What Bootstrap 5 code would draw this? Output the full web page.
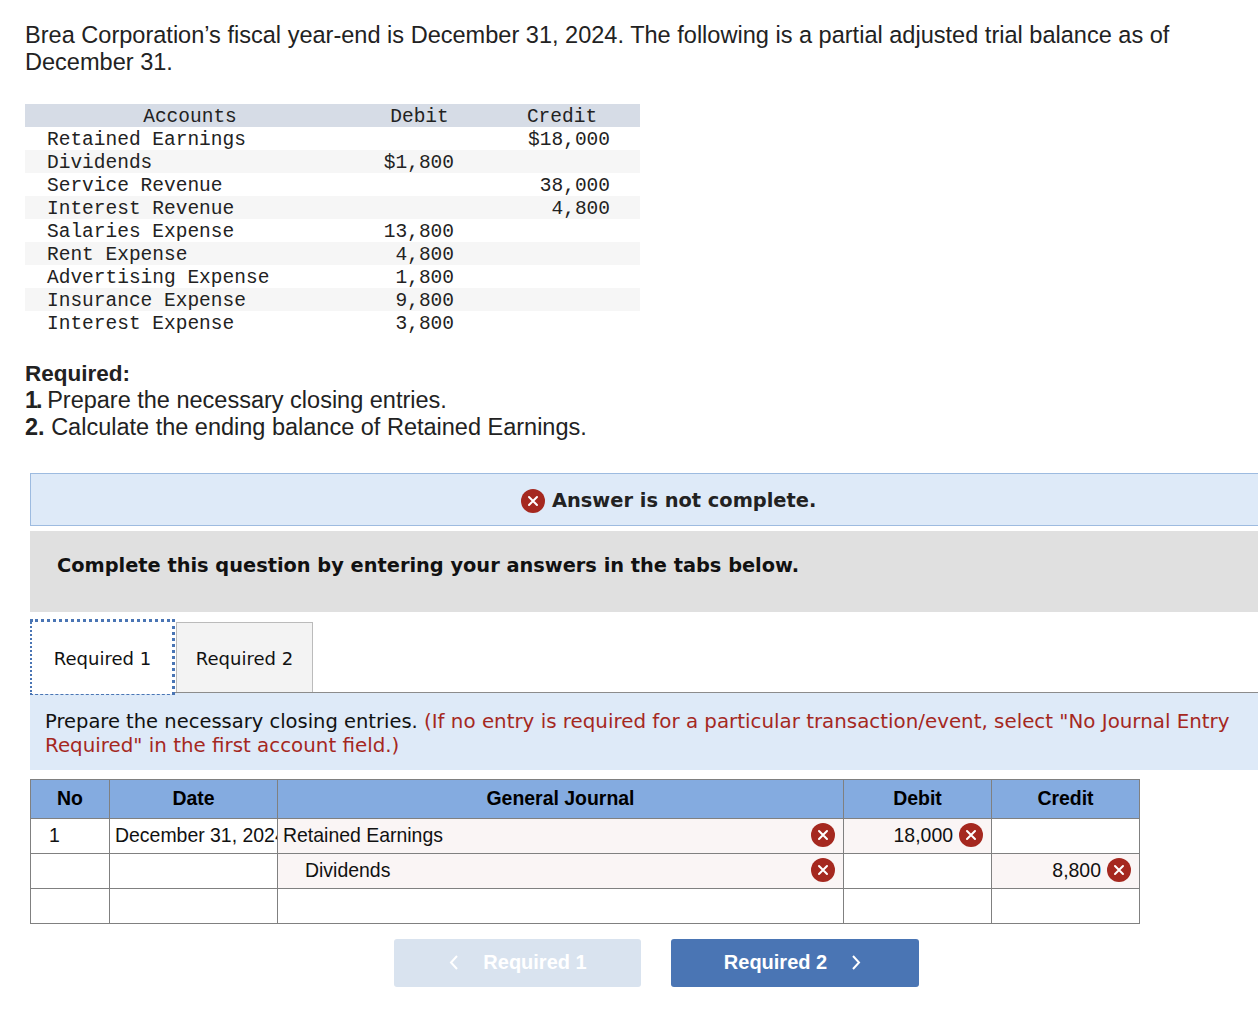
<!DOCTYPE html>
<html lang="en">
<head>
    <meta charset="UTF-8" />
    <meta name="viewport" content="width=device-width, initial-scale=1" />
    <title>Closing Entries - Brea Corporation</title>
    <link href="https://cdn.jsdelivr.net/npm/bootstrap@5.3.0/dist/css/bootstrap.min.css" rel="stylesheet" />
    <style>
        html, body { overflow-x: hidden; }
        body {
            width: 1262px;
            padding: 22px 0 0 25px;
            font-family: "Liberation Sans", Arial, sans-serif;
            color: #222;
        }
        .intro {
            font-size: 23.55px;
            line-height: 27px;
            margin: 0 60px 0 0;
            width: 1200px;
        }
        /* trial balance */
        .trial {
            width: 615px;
            margin-top: 28px;
            table-layout: fixed;
            border-collapse: collapse;
            font-family: "Liberation Mono", monospace;
            font-size: 19.5px;
            line-height: 20px;
            color: #222;
        }
        .trial th, .trial td { padding: 3px 0 0; height: 23px; font-weight: 400; white-space: nowrap; }
        .trial thead tr { background: #d6dce6; }
        .trial tbody tr:nth-child(even) { background: #f6f6f6; }
        .trial .acct { padding-left: 22px; }
        .trial th { text-align: center; }
        .trial .amt { text-align: right; padding-right: 30px; }
        .required-block {
            margin-top: 26px;
            font-size: 23.5px;
            line-height: 27px;
        }
        .required-title { font-size: 22.5px; font-weight: 700; }
        .step-one { letter-spacing: -2px; }
        /* answer area */
        .answer { margin: 32px 0 0 5px; }
        .status-bar {
            height: 53px;
            background: #deeaf8;
            border: 1px solid #9dbbe0;
            font-family: "DejaVu Sans", Verdana, sans-serif;
            font-weight: 700;
            font-size: 19.4px;
            color: #222;
            padding: 2px 0 0 490px;
            gap: 7px;
        }
        .instruct-bar {
            height: 81px;
            margin-top: 5px;
            background: #e0e0e0;
            font-family: "DejaVu Sans", Verdana, sans-serif;
            font-weight: 700;
            font-size: 19.37px;
            color: #111;
            padding: 20px 27px 0;
        }
        .err-icon { flex: none; display: block; }
        .tab-row { height: 80px; padding-top: 10px; font-family: "DejaVu Sans", Verdana, sans-serif; font-size: 18px; color: #111; }
        .tab-item {
            height: 70px;
            display: flex;
            align-items: center;
            justify-content: center;
            padding-top: 1px;
            background: #f3f3f3;
            border: 1px solid #bbb;
            border-bottom: 0;
            width: 137px;
        }
        .tab-on {
            position: relative;
            z-index: 1;
            width: 145px;
            height: 72px;
            margin-right: 1px;
            background: #fff;
            border: 0;
        }
        /* dotted focus box lies over the tab edge */
        .tab-on::after {
            content: "";
            position: absolute;
            left: 0; right: 0; top: -3px; bottom: -1px;
            border: 2px dotted #4a75b4;
            border-top-width: 3px;
            border-right-width: 3px;
            border-bottom: 1px dashed #4a75b4;
            pointer-events: none;
        }
        .hint-bar {
            height: 78px;
            background: #deeaf8;
            border-top: 1px solid #8c8c8c;
            padding: 17px 15px 0;
            font-family: "DejaVu Sans", Verdana, sans-serif;
            font-size: 19.5px;
            line-height: 24px;
            color: #111;
        }
        .hint-red { color: #a5281f; font-size: 19.85px; }
        /* journal */
        .journal {
            width: 1110px;
            margin-top: 9px;
            table-layout: fixed;
            border-collapse: collapse;
            font-size: 19.45px;
            color: #111;
        }
        .journal th, .journal td { border: 1px solid #808080; padding: 0 5px; white-space: nowrap; overflow: hidden; }
        .journal th { height: 39px; background: #84abe0; text-align: center; font-weight: 700; color: #000; }
        .journal td { height: 35px; }
        .journal .bad { background: #faf5f5; }
        .journal .num { padding-left: 18px; }
        .journal .indent { padding-left: 27px; }
        .icon-gap { margin: -2px 3px 0 0; }
        .amt-cell { gap: 6px; }
        .btn-nav {
            height: 48px;
            font-size: 20px;
            font-weight: 700;
            border-radius: 3px;
            border: 0;
            color: #fff;
            padding-bottom: 8px;
        }
        .nav-row { margin-top: 15px; width: 1110px; padding-left: 364px; gap: 30px; }
        .btn-prev, .btn-prev:disabled { width: 247px; background: #d9e3ef; color: #fff; opacity: 1; }
        .btn-next, .btn-next:hover { width: 248px; padding-right: 16px; background: #4a75b4; color: #fff; }
    </style>
</head>
<body>
<p class="intro">Brea Corporation’s fiscal year-end is December 31, 2024. The following is a partial adjusted trial balance as of December 31.</p>

<table class="trial">
    <colgroup><col style="width:330px"><col style="width:129px"><col style="width:156px"></colgroup>
    <thead><tr><th>Accounts</th><th>Debit</th><th>Credit</th></tr></thead>
    <tbody>
        <tr><td class="acct">Retained Earnings</td><td class="amt"></td><td class="amt">$18,000</td></tr>
        <tr><td class="acct">Dividends</td><td class="amt">$1,800</td><td class="amt"></td></tr>
        <tr><td class="acct">Service Revenue</td><td class="amt"></td><td class="amt">38,000</td></tr>
        <tr><td class="acct">Interest Revenue</td><td class="amt"></td><td class="amt">4,800</td></tr>
        <tr><td class="acct">Salaries Expense</td><td class="amt">13,800</td><td class="amt"></td></tr>
        <tr><td class="acct">Rent Expense</td><td class="amt">4,800</td><td class="amt"></td></tr>
        <tr><td class="acct">Advertising Expense</td><td class="amt">1,800</td><td class="amt"></td></tr>
        <tr><td class="acct">Insurance Expense</td><td class="amt">9,800</td><td class="amt"></td></tr>
        <tr><td class="acct">Interest Expense</td><td class="amt">3,800</td><td class="amt"></td></tr>
    </tbody>
</table>

<div class="required-block">
    <div class="required-title">Required:</div>
    <div><b class="step-one">1.</b> Prepare the necessary closing entries.</div>
    <div><b>2.</b> Calculate the ending balance of Retained Earnings.</div>
</div>

<div class="answer">
    <div class="status-bar d-flex align-items-center">
        <svg class="err-icon" width="24" height="24" viewBox="0 0 24 24"><circle cx="12" cy="12" r="12" fill="#a5281f"/><path d="M8 8l8 8M16 8l-8 8" stroke="#fff" stroke-width="2" stroke-linecap="round"/></svg>
        <span>Answer is not complete.</span>
    </div>
    <div class="instruct-bar">Complete this question by entering your answers in the tabs below.</div>

    <div class="tab-row d-flex align-items-start">
        <div class="tab-item tab-on">Required 1</div>
        <div class="tab-item">Required 2</div>
    </div>
    <div class="hint-bar">Prepare the necessary closing entries. <span class="hint-red">(If no entry is required for a particular transaction/event, select "No Journal Entry Required" in the first account field.)</span></div>

    <table class="journal">
        <colgroup><col style="width:79px"><col style="width:168px"><col style="width:566px"><col style="width:148px"><col style="width:148px"></colgroup>
        <thead><tr><th>No</th><th>Date</th><th>General Journal</th><th>Debit</th><th>Credit</th></tr></thead>
        <tbody>
            <tr>
                <td class="num">1</td>
                <td>December 31, 2024</td>
                <td class="bad"><div class="d-flex justify-content-between align-items-center"><span>Retained Earnings</span><svg class="err-icon icon-gap" width="24" height="24" viewBox="0 0 24 24"><circle cx="12" cy="12" r="12" fill="#a5281f"/><path d="M8 8l8 8M16 8l-8 8" stroke="#fff" stroke-width="2" stroke-linecap="round"/></svg></div></td>
                <td class="bad"><div class="d-flex justify-content-end align-items-center amt-cell"><span>18,000</span><svg class="err-icon icon-gap" width="24" height="24" viewBox="0 0 24 24"><circle cx="12" cy="12" r="12" fill="#a5281f"/><path d="M8 8l8 8M16 8l-8 8" stroke="#fff" stroke-width="2" stroke-linecap="round"/></svg></div></td>
                <td></td>
            </tr>
            <tr>
                <td></td>
                <td></td>
                <td class="bad indent"><div class="d-flex justify-content-between align-items-center"><span>Dividends</span><svg class="err-icon icon-gap" width="24" height="24" viewBox="0 0 24 24"><circle cx="12" cy="12" r="12" fill="#a5281f"/><path d="M8 8l8 8M16 8l-8 8" stroke="#fff" stroke-width="2" stroke-linecap="round"/></svg></div></td>
                <td></td>
                <td class="bad"><div class="d-flex justify-content-end align-items-center amt-cell"><span>8,800</span><svg class="err-icon icon-gap" width="24" height="24" viewBox="0 0 24 24"><circle cx="12" cy="12" r="12" fill="#a5281f"/><path d="M8 8l8 8M16 8l-8 8" stroke="#fff" stroke-width="2" stroke-linecap="round"/></svg></div></td>
            </tr>
            <tr><td></td><td></td><td></td><td></td><td></td></tr>
        </tbody>
    </table>

    <div class="nav-row d-flex">
        <button class="btn btn-nav btn-prev d-flex align-items-center justify-content-center gap-4" disabled>
            <svg width="11" height="17" viewBox="0 0 11 17"><path d="M9 2L3 8.500L9 15" fill="none" stroke="#fff" stroke-width="2"/></svg>
            <span>Required 1</span>
        </button>
        <button class="btn btn-nav btn-next d-flex align-items-center justify-content-center gap-4">
            <span>Required 2</span>
            <svg width="11" height="17" viewBox="0 0 11 17"><path d="M2 2L8 8.500L2 15" fill="none" stroke="#fff" stroke-width="2"/></svg>
        </button>
    </div>
</div>

<script src="https://cdn.jsdelivr.net/npm/bootstrap@5.3.0/dist/js/bootstrap.bundle.min.js"></script>
</body>
</html>
